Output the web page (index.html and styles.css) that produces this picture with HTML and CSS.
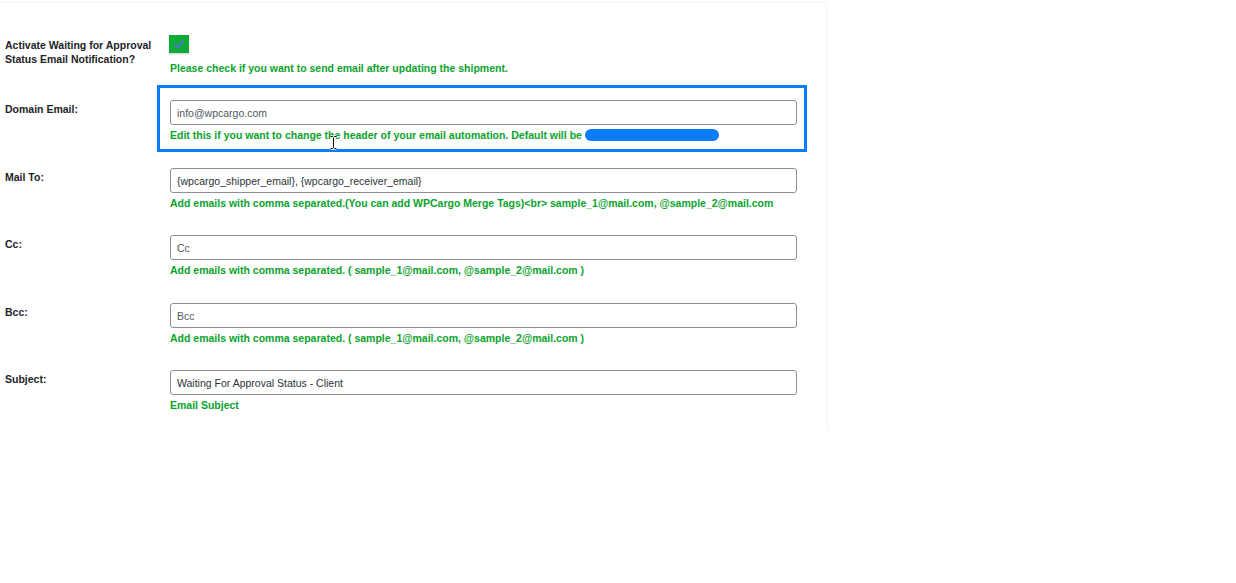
FILE: index.html
```html
<!DOCTYPE html>
<html>
<head>
<meta charset="utf-8">
<link rel="stylesheet" href="styles.css">
</head>
<body>
<div class="card">
  <div class="row row-first">
    <div class="label label-first">Activate Waiting for Approval Status Email Notification?</div>
    <div class="field">
      <div class="checkbox">
        <svg width="20" height="18" viewBox="0 0 20 18"><path d="M6 9.5 L9 12.5 L14.5 5.5" fill="none" stroke="#4f74d6" stroke-width="2" stroke-linecap="round" stroke-linejoin="round"/></svg>
      </div>
      <div class="desc desc-first">Please check if you want to send email after updating the shipment.</div>
    </div>
  </div>
  <div class="row">
    <div class="label">Domain Email:</div>
    <div class="field">
      <div class="input">info@wpcargo.com</div>
      <div class="desc">Edit this if you want to change the header of your email automation. Default will be <span class="redact"></span></div>
    </div>
  </div>
  <div class="row">
    <div class="label">Mail To:</div>
    <div class="field">
      <div class="input value">{wpcargo_shipper_email}, {wpcargo_receiver_email}</div>
      <div class="desc">Add emails with comma separated.(You can add WPCargo Merge Tags)&lt;br&gt; sample_1@mail.com, @sample_2@mail.com</div>
    </div>
  </div>
  <div class="row">
    <div class="label">Cc:</div>
    <div class="field">
      <div class="input">Cc</div>
      <div class="desc">Add emails with comma separated. ( sample_1@mail.com, @sample_2@mail.com )</div>
    </div>
  </div>
  <div class="row">
    <div class="label">Bcc:</div>
    <div class="field">
      <div class="input">Bcc</div>
      <div class="desc">Add emails with comma separated. ( sample_1@mail.com, @sample_2@mail.com )</div>
    </div>
  </div>
  <div class="row">
    <div class="label">Subject:</div>
    <div class="field">
      <div class="input value">Waiting For Approval Status - Client</div>
      <div class="desc">Email Subject</div>
    </div>
  </div>
  <div class="highlight"></div>
  <svg class="cursor" width="9" height="15" viewBox="0 0 9 15"><path d="M1.5 1.5 H3.5 L4.5 2.5 L5.5 1.5 H7.5 M4.5 2.5 V12.5 M1.5 13.5 H3.5 L4.5 12.5 L5.5 13.5 H7.5" fill="none" stroke="#fff" stroke-width="2.5"/><path d="M1.5 1.5 H3.5 L4.5 2.5 L5.5 1.5 H7.5 M4.5 2.5 V12.5 M1.5 13.5 H3.5 L4.5 12.5 L5.5 13.5 H7.5" fill="none" stroke="#000" stroke-width="1"/></svg>
</div>
</body>
</html>
```

FILE: styles.css
```css
html, body {
  margin: 0;
  padding: 0;
  background: #fff;
}
body {
  font-family: "Liberation Sans", Arial, sans-serif;
  font-size: 10.5px;
  color: #1d2327;
}
.card {
  position: relative;
  width: 826px;
  margin-top: 3px;
  background: #fff;
  box-shadow: 0 0 3px rgba(0, 0, 0, 0.10);
  padding-bottom: 1px;
}
.row {
  display: grid;
  grid-template-columns: 170px 627px;
  padding: 10px 0 14.5px;
}
.row-first {
  padding: 32px 0 14px;
}
.label {
  padding: 2px 10px 0 5px;
  font-weight: bold;
  line-height: 14px;
  color: #1d2327;
}
.label-first {
  padding-top: 3px;
}
.field {
  display: flex;
  flex-direction: column;
}
.checkbox {
  width: 20px;
  height: 18px;
  margin-left: -1px;
  background: #0eab37;
  box-shadow: 0 1.5px 0 #d7dde3;
}
.checkbox svg {
  display: block;
}
.input {
  box-sizing: border-box;
  height: 25px;
  border: 1px solid #8c8f94;
  border-radius: 3px;
  padding: 0 6px;
  line-height: 24px;
  color: #50575e;
  background: #fff;
}
.input.value {
  color: #2c3338;
}
.desc {
  margin-top: 3px;
  line-height: 15px;
  font-weight: bold;
  color: #0aa32c;
  white-space: nowrap;
}
.desc-first {
  margin-top: 8px;
}
.redact {
  display: inline-block;
  width: 134px;
  height: 12px;
  border-radius: 6px;
  background: #0a7cff;
  vertical-align: -2px;
}
.highlight {
  position: absolute;
  left: 157px;
  top: 82px;
  width: 650px;
  height: 67px;
  box-sizing: border-box;
  border: 3px solid #0a7cff;
}
.cursor {
  position: absolute;
  left: 329px;
  top: 132px;
}
```
